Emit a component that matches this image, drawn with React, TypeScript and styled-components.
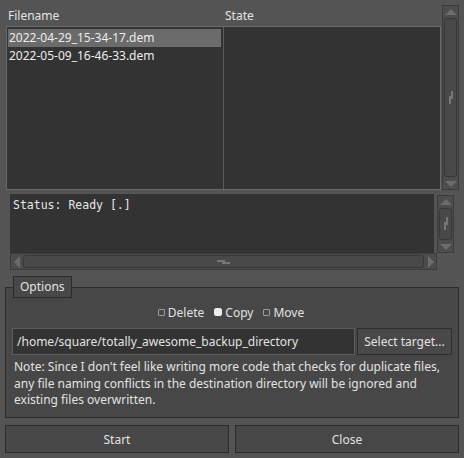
import React from 'react';
import styled, { createGlobalStyle } from 'styled-components';

const Global = createGlobalStyle`
  html, body { margin: 0; padding: 0; background: #545454; }
  body { font-family: "Noto Sans", "DejaVu Sans", sans-serif; font-size: 12px; color: #e2e2e2; }
  * { box-sizing: border-box; }
`;

const Window = styled.div`
  width: 464px;
  height: 458px;
  padding: 5px;
  display: flex;
  flex-direction: column;
  background: #545454;
`;

/* ---------- tree ---------- */
const Tree = styled.div`
  height: 186px;
  display: flex;
  gap: 1px;
  padding-left: 1px;
`;

const TreeMain = styled.div`
  flex: 1;
  display: flex;
  flex-direction: column;
`;

const Header = styled.div`
  height: 21px;
  display: grid;
  grid-template-columns: 217px 1fr;
  align-items: center;
`;

const HeaderCell = styled.div`
  padding-left: 2px;
  color: #e4e4e4;
`;

const ListBody = styled.div`
  flex: 1;
  display: grid;
  grid-template-columns: 216px 1fr;
  gap: 1px;
  background: #5a5a5a;
  border: 1px solid #6a6a6a;
`;

const Column = styled.div`
  background: #333333;
  display: flex;
  flex-direction: column;
  padding: 2px 1px;
`;

const Row = styled.div<{ $selected?: boolean }>`
  height: 18px;
  line-height: 18px;
  padding-left: 1px;
  margin-right: 1px;
  background: ${(p) => (p.$selected ? '#6b6b6b' : 'transparent')};
  color: #ececec;
  white-space: nowrap;
`;

/* ---------- scrollbars ---------- */
const VBar = styled.div`
  width: 17px;
  display: flex;
  flex-direction: column;
  border: 1px solid #3c3c3c;
  background: #4a4a4a;
`;

const HBar = styled.div`
  height: 17px;
  display: flex;
  border: 1px solid #3c3c3c;
  background: #4a4a4a;
`;

const ArrowBox = styled.div`
  flex: 0 0 11px;
  display: flex;
  align-items: center;
  justify-content: center;
  background: #4d4d4d;
`;

const Handle = styled.div`
  flex: 1;
  margin: 1px;
  border: 1px solid #383838;
  border-radius: 3px;
  background: #494949;
  display: flex;
  align-items: center;
  justify-content: center;
`;

const ArrowSvg = ({ dir }: { dir: 'up' | 'down' | 'left' | 'right' }) => {
  const pts = {
    up: '1,8 7,2 13,8',
    down: '1,2 7,8 13,2',
    left: '8,0 2,6 8,12',
    right: '2,0 8,6 2,12',
  }[dir];
  const hz = dir === 'left' || dir === 'right';
  return (
    <svg width={hz ? 10 : 14} height={hz ? 12 : 10} viewBox={hz ? '0 0 10 12' : '0 0 14 10'}>
      <polygon points={pts} fill="#6c6c6c" />
    </svg>
  );
};

const GripV = () => (
  <svg width="6" height="14" viewBox="0 0 6 14">
    <rect x="3" y="0" width="2" height="8" fill="#767676" />
    <rect x="1" y="5" width="2" height="8" fill="#767676" />
    <rect x="1" y="7" width="4" height="1" fill="#767676" />
  </svg>
);

const GripH = () => (
  <svg width="14" height="6" viewBox="0 0 14 6">
    <rect x="0" y="1" width="8" height="2" fill="#767676" />
    <rect x="5" y="3" width="8" height="2" fill="#767676" />
  </svg>
);

const VScroll = () => (
  <VBar>
    <ArrowBox><ArrowSvg dir="up" /></ArrowBox>
    <Handle><GripV /></Handle>
    <ArrowBox><ArrowSvg dir="down" /></ArrowBox>
  </VBar>
);

const HScroll = () => (
  <HBar>
    <ArrowBox><ArrowSvg dir="left" /></ArrowBox>
    <Handle><GripH /></Handle>
    <ArrowBox><ArrowSvg dir="right" /></ArrowBox>
  </HBar>
);

/* ---------- status ---------- */
const Status = styled.div`
  margin: 4px 0 0 5px;
  width: 444px;
  height: 76px;
  display: grid;
  grid-template-columns: 424px 3px 17px;
  grid-template-rows: 59px 17px;
`;

const StatusText = styled.div`
  background: #333333;
  padding: 3px 3px;
  font-family: "DejaVu Sans Mono", monospace;
  font-size: 11.5px;
  line-height: 16px;
  color: #e6e6e6;
`;

const StatusV = styled.div`
  grid-column: 3;
  grid-row: 1;
  display: flex;
  padding-top: 1px;
`;

const StatusH = styled.div`
  grid-column: 1 / 3;
  grid-row: 2;
  display: flex;
  flex-direction: column;
`;

/* ---------- options ---------- */
const Group = styled.div`
  margin-top: 6px;
  display: flex;
  flex-direction: column;
`;

const Tab = styled.div`
  align-self: flex-start;
  margin-left: 8px;
  height: 22px;
  padding: 0 6px;
  line-height: 20px;
  background: #484848;
  border: 1px solid #2b2b2b;
  position: relative;
  z-index: 1;
  margin-bottom: -11px;
`;

const Frame = styled.div`
  height: 131px;
  border: 1px solid #2b2b2b;
  background: #474747;
  padding: 14px 6px 0 6px;
  display: flex;
  flex-direction: column;
`;

const ModeRow = styled.div`
  height: 20px;
  display: flex;
  justify-content: center;
  align-items: center;
  gap: 10px;
  padding-right: 2px;
`;

const Mode = styled.label`
  display: flex;
  align-items: center;
  gap: 3px;
`;

const Indicator = styled.span<{ $on?: boolean }>`
  width: ${(p) => (p.$on ? '8px' : '7px')};
  height: ${(p) => (p.$on ? '8px' : '7px')};
  border-radius: ${(p) => (p.$on ? '2px' : '1px')};
  border: 1px solid ${(p) => (p.$on ? '#ececec' : '#9a9a9a')};
  background: ${(p) => (p.$on ? '#ececec' : 'transparent')};
`;

const TargetRow = styled.div`
  margin-top: 6px;
  display: flex;
  gap: 2px;
  height: 27px;
`;

const PathInput = styled.div`
  width: 343px;
  background: #333333;
  border: 1px solid #5c5c5c;
  padding-left: 4px;
  display: flex;
  align-items: center;
  color: #e2e2e2;
`;

const SmallButton = styled.div`
  flex: 1;
  border: 1px solid #2e2e2e;
  background: #484848;
  display: flex;
  align-items: center;
  justify-content: center;
`;

const Note = styled.div`
  margin-top: 4px;
  padding-left: 2px;
  line-height: 16.5px;
`;

/* ---------- buttons ---------- */
const Buttons = styled.div`
  margin-top: 7px;
  height: 28px;
  display: grid;
  grid-template-columns: 224px 1fr;
  gap: 6px;
`;

const Button = styled.div`
  border: 1px solid #2b2b2b;
  background: #474747;
  display: flex;
  align-items: center;
  justify-content: center;
`;

export default function App() {
  return (
    <>
      <Global />
      <Window>
        <Tree>
          <TreeMain>
            <Header>
              <HeaderCell>Filename</HeaderCell>
              <HeaderCell>State</HeaderCell>
            </Header>
            <ListBody>
              <Column>
                <Row $selected>2022-04-29_15-34-17.dem</Row>
                <Row>2022-05-09_16-46-33.dem</Row>
              </Column>
              <Column />
            </ListBody>
          </TreeMain>
          <VScroll />
        </Tree>

        <Status>
          <StatusText>Status: Ready [.]</StatusText>
          <StatusV><VScroll /></StatusV>
          <StatusH><HScroll /></StatusH>
        </Status>

        <Group>
          <Tab>Options</Tab>
          <Frame>
            <ModeRow>
              <Mode><Indicator />Delete</Mode>
              <Mode><Indicator $on />Copy</Mode>
              <Mode><Indicator />Move</Mode>
            </ModeRow>
            <TargetRow>
              <PathInput>/home/square/totally_awesome_backup_directory</PathInput>
              <SmallButton>Select target...</SmallButton>
            </TargetRow>
            <Note>
              Note: Since I don't feel like writing more code that checks for duplicate files,
              <br />
              any file naming conflicts in the destination directory will be ignored and
              <br />
              existing files overwritten.
            </Note>
          </Frame>
        </Group>

        <Buttons>
          <Button>Start</Button>
          <Button>Close</Button>
        </Buttons>
      </Window>
    </>
  );
}
